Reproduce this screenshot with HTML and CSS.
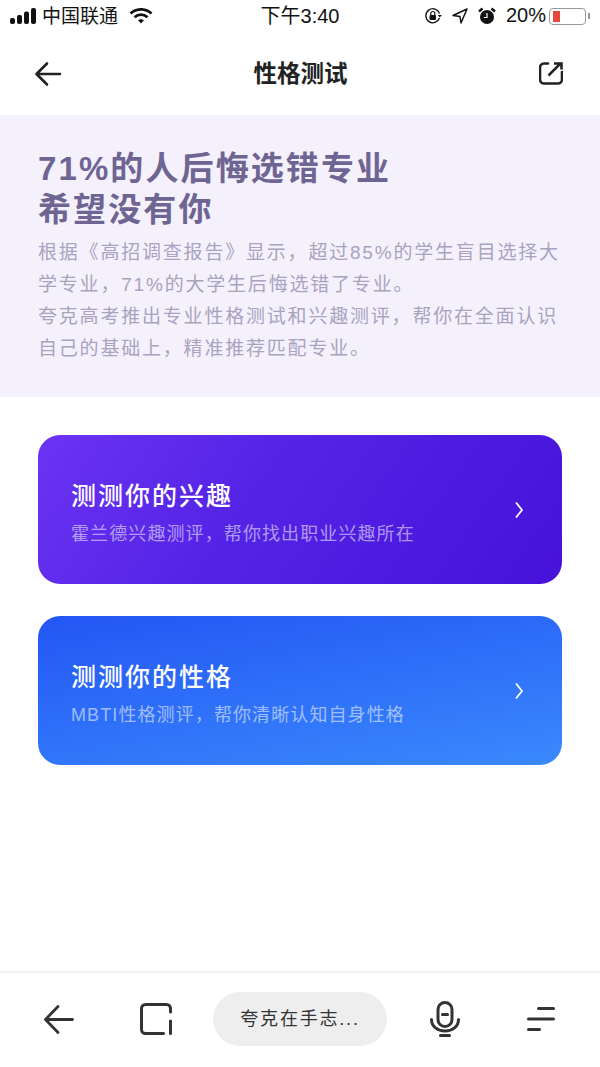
FILE: index.html
```html
<!DOCTYPE html>
<html lang="zh-CN">
<head>
    <meta charset="UTF-8">
    <meta name="viewport" content="width=device-width, initial-scale=1.0">
    <title>性格测试</title>
    <link rel="stylesheet" href="styles.css">
</head>
<body>
    <div class="page">
        <div class="status-bar">
            <div class="status-side">
                <svg class="signal" width="27" height="16" viewBox="0 0 27 16"><rect x="0" y="10" width="5" height="6" rx="2"/><rect x="7" y="7" width="5" height="9" rx="2"/><rect x="14" y="3.500" width="5" height="12.500" rx="2"/><rect x="21" y="0" width="5" height="16" rx="2"/></svg>
                <span class="carrier">中国联通</span>
                <svg class="wifi" width="24" height="16" viewBox="0 0 24 16"><path d="M1.500 5.500C7.500 0 16.500 0 22.500 5.500" fill="none" stroke="#111" stroke-width="2.800"/><path d="M5.500 9.300C9.500 5.800 14.500 5.800 18.500 9.300" fill="none" stroke="#111" stroke-width="2.800"/><path d="M9 12.300C11 10.800 13 10.800 15 12.300L12 15.500Z" fill="#111"/></svg>
            </div>
            <div class="status-time">下午3:40</div>
            <div class="status-side status-right">
                <svg width="18" height="18" viewBox="0 0 18 18"><path d="M15.500 11A7 7 0 1 1 15.500 6.500" fill="none" stroke="#111" stroke-width="1.300"/><path d="M13.800 8h4l-2 2.500z" fill="#111"/><rect x="5.500" y="8" width="6.500" height="5" rx="1" fill="#111"/><path d="M6.800 8V6.500a2 2 0 0 1 4 0V8" fill="none" stroke="#111" stroke-width="1.200"/></svg>
                <svg class="gps" width="16" height="16" viewBox="0 0 16 16"><path d="M15 1L1 7.500l7 1 1 6.500z" fill="none" stroke="#111" stroke-width="1.500" stroke-linejoin="round"/></svg>
                <svg class="alarm" width="18" height="18" viewBox="0 0 18 18"><circle cx="9" cy="10" r="7" fill="#111"/><path d="M1 4.500L4.500 1.500M17 4.500L13.500 1.500" stroke="#111" stroke-width="2.400"/><path d="M9 6v4.500H5.800" fill="none" stroke="#fff" stroke-width="1.200"/></svg>
                <span class="battery-text">20%</span>
                <div class="battery"><div class="battery-level"></div></div>
                <div class="battery-tip"></div>
            </div>
        </div>

        <div class="nav-bar">
            <svg width="28" height="28" viewBox="0 0 28 28"><path d="M26 14H3M13 3.500L2.500 14 13 24.500" fill="none" stroke="#222" stroke-width="2.600" stroke-linecap="round" stroke-linejoin="round"/></svg>
            <h1>性格测试</h1>
            <svg width="24" height="23" viewBox="0 0 24 23"><path d="M9 1.500H5a4 4 0 0 0-4 4v12a4 4 0 0 0 4 4h14a4 4 0 0 0 4-4V10" fill="none" stroke="#222" stroke-width="2.600" stroke-linecap="round"/><path d="M9.500 13.500L21 1.800M15 1.500h7.500V7.500" fill="none" stroke="#222" stroke-width="2.600"/></svg>
        </div>

        <div class="hero">
            <h2>71%的人后悔选错专业<br>希望没有你</h2>
            <p>根据《高招调查报告》显示，超过85%的学生盲目选择大学专业，71%的大学生后悔选错了专业。</p>
            <p>夸克高考推出专业性格测试和兴趣测评，帮你在全面认识自己的基础上，精准推荐匹配专业。</p>
        </div>

        <div class="cards">
            <div class="card card-purple">
                <div class="card-text">
                    <div class="card-title">测测你的兴趣</div>
                    <div class="card-desc">霍兰德兴趣测评，帮你找出职业兴趣所在</div>
                </div>
                <svg width="10" height="18" viewBox="0 0 10 18"><path d="M2 1.500L8 9 2 16.500" fill="none" stroke="#fff" stroke-width="1.800"/></svg>
            </div>
            <div class="card card-blue">
                <div class="card-text">
                    <div class="card-title">测测你的性格</div>
                    <div class="card-desc">MBTI性格测评，帮你清晰认知自身性格</div>
                </div>
                <svg width="10" height="18" viewBox="0 0 10 18"><path d="M2 1.500L8 9 2 16.500" fill="none" stroke="#fff" stroke-width="1.800"/></svg>
            </div>
        </div>

        <div class="bottom-bar">
            <svg class="tool-back" width="30" height="29" viewBox="0 0 30 29"><path d="M28.500 14.500H3M14 1.500L1.500 14.500 14 27.500" fill="none" stroke="#333" stroke-width="2.800" stroke-linecap="round" stroke-linejoin="round"/></svg>
            <svg class="tool-tabs" width="32" height="32" viewBox="0 0 32 32"><path d="M30.500 18v12.500M30.500 9V5.500a4 4 0 0 0-4-4H5.500a4 4 0 0 0-4 4v21a4 4 0 0 0 4 4h18" fill="none" stroke="#333" stroke-width="3" stroke-linecap="round"/></svg>
            <div class="search-pill">夸克在手志...</div>
            <svg class="tool-mic" width="30" height="36" viewBox="0 0 30 36"><rect x="8" y="1.500" width="14" height="24" rx="7" fill="none" stroke="#333" stroke-width="3"/><path d="M1.500 18.500c0 7 6 11.500 13.500 11.500s13.500-4.500 13.500-11.500" fill="none" stroke="#333" stroke-width="3" stroke-linecap="round"/><path d="M12.500 13.500h5M10.500 34.500h9" stroke="#333" stroke-width="3" stroke-linecap="round"/></svg>
            <svg class="tool-menu" width="28" height="24" viewBox="0 0 28 24"><path d="M11.500 1.500h15M1.500 12h25M1.500 22.500h11" stroke="#333" stroke-width="3" stroke-linecap="round"/></svg>
        </div>
    </div>
</body>
</html>
```

FILE: styles.css
```css
body {
    margin: 0;
    font-family: "Liberation Sans", "Noto Sans CJK SC", sans-serif;
    background-color: #fff;
}
.page {
    width: 600px;
    height: 1067px;
    display: flex;
    flex-direction: column;
    overflow: hidden;
}
.status-bar {
    height: 32px;
    padding: 0 10px;
    display: flex;
    align-items: center;
    justify-content: space-between;
    color: #111;
    box-sizing: border-box;
}
.status-side {
    width: 200px;
    display: flex;
    align-items: center;
}
.status-right {
    justify-content: flex-end;
}
.signal {
    fill: #111;
    margin-right: 5px;
}
.carrier {
    font-size: 19px;
    margin-right: 11px;
    margin-bottom: 3px;
}
.status-time {
    font-size: 20px;
    margin-bottom: 3px;
}
.gps {
    margin-left: 10px;
}
.alarm {
    margin-left: 10px;
}
.battery-text {
    font-size: 20px;
    margin-left: 10px;
    margin-right: -1px;
    margin-bottom: 2px;
}
.battery {
    width: 37px;
    height: 17px;
    margin-left: 4px;
    padding: 2px 2px 2px 3px;
    border: 1px solid #999;
    border-radius: 4px;
    display: flex;
    align-items: center;
    box-sizing: border-box;
}
.battery-level {
    width: 7px;
    height: 11px;
    background-color: #e8483c;
}
.battery-tip {
    width: 2px;
    height: 6px;
    margin-left: 2px;
    background-color: #999;
}
.nav-bar {
    height: 83px;
    padding: 0 37px 0 34px;
    display: flex;
    align-items: center;
    justify-content: space-between;
    box-sizing: border-box;
}
.nav-bar h1 {
    margin: 0 0 4px;
    font-size: 23.500px;
    font-weight: 700;
    color: #222;
}
.hero {
    height: 282px;
    padding: 33px 38px 0;
    background-color: #f4f1fc;
    box-sizing: border-box;
}
.hero h2 {
    margin: 0 0 7px;
    font-size: 33px;
    line-height: 41px;
    font-weight: 700;
    color: #6f6593;
    letter-spacing: 2.100px;
}
.hero p {
    margin: 0;
    font-size: 19px;
    line-height: 32px;
    color: #a9a3bf;
    letter-spacing: 1.800px;
}
.cards {
    flex: 1;
    padding: 38px 38px 0;
    display: flex;
    flex-direction: column;
    gap: 32px;
}
.card {
    height: 149px;
    padding: 0 38px 0 33px;
    border-radius: 22px;
    display: flex;
    align-items: center;
    justify-content: space-between;
    box-sizing: border-box;
}
.card-text {
    padding-top: 6px;
}
.card-purple {
    background: linear-gradient(125deg, #6c33f3 0%, #5424e6 40%, #4612da 100%);
}
.card-blue {
    background: linear-gradient(170deg, #2356f4 0%, #3a89fd 100%);
}
.card-title {
    font-size: 25px;
    line-height: 36px;
    font-weight: 500;
    color: #fff;
    letter-spacing: 2px;
}
.card-desc {
    margin-top: 6px;
    font-size: 18px;
    line-height: 28px;
    color: rgba(255, 255, 255, 0.55);
    letter-spacing: 1.100px;
}
.bottom-bar {
    height: 96px;
    padding: 0 0 2px 44px;
    border-top: 2px solid #f1f1f1;
    display: flex;
    align-items: center;
    box-sizing: border-box;
}
.tool-tabs {
    margin-left: 66px;
}
.search-pill {
    width: 174px;
    height: 54px;
    margin-left: 41px;
    border-radius: 27px;
    background-color: #eeeeee;
    color: #333;
    font-size: 18px;
    line-height: 54px;
    text-align: center;
    letter-spacing: 1.800px;
}
.tool-mic {
    margin-left: 43px;
}
.tool-menu {
    margin-left: 67px;
}
```
